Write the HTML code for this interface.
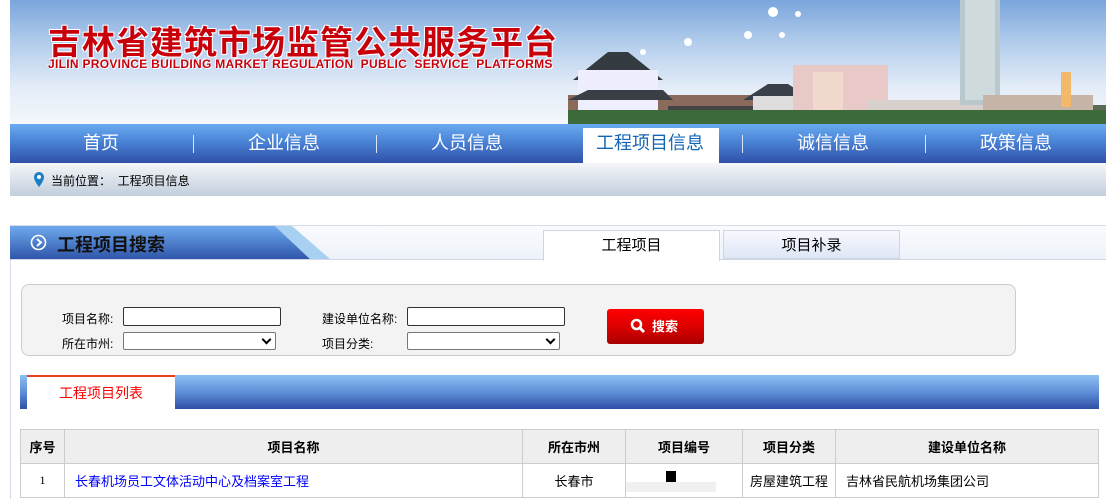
<!DOCTYPE html>
<html><head><meta charset="utf-8"><style>
*{margin:0;padding:0;box-sizing:border-box}
body{width:1106px;height:499px;overflow:hidden;background:#fff;font-family:"Liberation Sans","Noto Sans CJK SC",sans-serif;font-size:12px;color:#000;position:relative}
.abs{position:absolute}
#hdr{left:10px;top:0;width:1096px;height:124px;background:linear-gradient(180deg,#7aa5dc 0%,#b3cdec 35%,#e3ecf8 70%,#f4f7fb 100%);overflow:hidden}
#nav{left:10px;top:124px;width:1096px;height:39px;background:linear-gradient(180deg,#6aaaf0 0%,#4a83d6 45%,#2f4fa8 100%)}
.ni{position:absolute;top:0;height:39px;line-height:39px;color:#fff;font-size:18px;text-align:center;width:150px}
.sep{position:absolute;top:11px;width:1px;height:18px;background:#d8e6f6}
#crumb{left:10px;top:163px;width:1096px;height:33px;background:linear-gradient(180deg,#f5f6f8,#c2cedd)}
input.t{position:absolute;height:19px;border:1px solid #333;border-radius:2px;background:#fff}
.sel{position:absolute;height:18px;border:1px solid #777;border-radius:2px;background:#fff}
.sel:after{content:"";position:absolute;right:5px;top:3px;width:5px;height:5px;border-right:2px solid #000;border-bottom:2px solid #000;transform:rotate(45deg)}
td,th{border:1px solid #ccc;height:34px;font-size:13px}
th{background:#eee;font-weight:bold}
</style></head><body>
<div id="hdr" class="abs">
 <div class="abs" style="left:38px;top:16px;font-size:33px;font-weight:bold;color:#c8000a;letter-spacing:1px;text-shadow:1px 1px 0 #fff,-1px -1px 0 #fff,1px -1px 0 #fff,-1px 1px 0 #fff">吉林省建筑市场监管公共服务平台</div>
 <div class="abs" style="left:38px;top:57px;font-size:12px;font-weight:bold;color:#c8000a;white-space:nowrap;letter-spacing:0.3px;text-shadow:1px 1px 0 #fff,-1px -1px 0 #fff">JILIN PROVINCE BUILDING MARKET REGULATION &nbsp;PUBLIC &nbsp;SERVICE &nbsp;PLATFORMS</div>
 <svg class="abs" style="left:558px;top:0" width="538" height="124">
  <rect x="0" y="105" width="538" height="19" fill="#5b6a52"/>
  <rect x="0" y="95" width="260" height="20" fill="#8a6a5a"/>
  <polygon points="5,80 40,52 60,52 95,80" fill="#333a40"/>
  <rect x="10" y="70" width="80" height="40" fill="#eef"/>
  <polygon points="0,100 20,90 95,90 105,100" fill="#3a3f45"/>
  <rect x="100" y="106" width="160" height="10" fill="#444"/>
  <polygon points="175,100 200,84 220,84 245,100" fill="#3a4048"/>
  <rect x="185" y="96" width="50" height="14" fill="#ddd"/>
  <rect x="225" y="65" width="95" height="45" fill="#e9c8c8"/>
  <rect x="245" y="72" width="30" height="38" fill="#f0d8cc"/>
  <rect x="300" y="100" width="140" height="15" fill="#d8d0cc"/>
  <rect x="392" y="0" width="40" height="105" fill="#b8c8cc"/>
  <rect x="397" y="0" width="30" height="100" fill="#cfdadc"/>
  <rect x="415" y="95" width="110" height="15" fill="#c6b4a8"/>
  <rect x="493" y="72" width="10" height="35" fill="#f3b96a"/>
  <rect x="0" y="110" width="538" height="14" fill="#3d6a3a"/>
  <g fill="#fff"><circle cx="205" cy="12" r="5"/><circle cx="230" cy="14" r="3"/><circle cx="180" cy="35" r="4"/><circle cx="214" cy="35" r="3"/><circle cx="120" cy="42" r="4"/><circle cx="75" cy="52" r="3"/></g>
 </svg>
</div>
<div id="nav" class="abs">
 <div class="ni" style="left:16px">首页</div><div class="sep" style="left:183px"></div>
 <div class="ni" style="left:199px">企业信息</div><div class="sep" style="left:366px"></div>
 <div class="ni" style="left:382px">人员信息</div>
 <div class="abs" style="left:573px;top:4px;width:136px;height:35px;background:#fff"></div>
 <div class="ni" style="left:565px;color:#1565b5">工程项目信息</div><div class="sep" style="left:732px"></div>
 <div class="ni" style="left:748px">诚信信息</div><div class="sep" style="left:915px"></div>
 <div class="ni" style="left:931px">政策信息</div>
</div>
<div id="crumb" class="abs">
 <svg class="abs" style="left:23px;top:8px" width="12" height="17"><path d="M6 1a5 5 0 0 0-5 5c0 4 5 10 5 10s5-6 5-10a5 5 0 0 0-5-5z" fill="#1a7fc4"/><circle cx="6" cy="6" r="2" fill="#fff"/></svg>
 <div class="abs" style="left:41px;top:9px;font-size:12px">当前位置： &nbsp;工程项目信息</div>
</div>
<div class="abs" style="left:10px;top:225px;width:1096px;height:274px;border-left:1px solid #d5dbe8;border-top:1px solid #d5dbe8"></div>
<div class="abs" style="left:10px;top:226px;width:1096px;height:34px;background:linear-gradient(180deg,#fafbfd,#eef2fa);border-bottom:1px solid #d0d8e8"></div>
<svg class="abs" style="left:10px;top:226px" width="330" height="34"><defs><linearGradient id="g1" x1="0" y1="0" x2="0" y2="1"><stop offset="0" stop-color="#6eaaee"/><stop offset="1" stop-color="#2f55aa"/></linearGradient></defs><polygon points="0,0 265,0 300,33 0,33" fill="url(#g1)"/><polygon points="265,0 282,0 320,33 300,33" fill="#a8d0f0"/></svg>
<svg class="abs" style="left:30px;top:234px" width="17" height="17"><circle cx="8.5" cy="8.5" r="7" fill="none" stroke="#fff" stroke-width="1.6"/><path d="M7 5l4 3.5-4 3.5" fill="none" stroke="#fff" stroke-width="2"/></svg>
<div class="abs" style="left:57px;top:231px;font-size:18px;font-weight:bold;color:#111">工程项目搜索</div>
<div class="abs" style="left:543px;top:230px;width:177px;height:31px;background:#fff;border:1px solid #cdd6e6;border-bottom:none;text-align:center;line-height:30px;font-size:15px">工程项目</div>
<div class="abs" style="left:723px;top:230px;width:177px;height:29px;background:linear-gradient(180deg,#f6f8fd,#dfe6f6);border:1px solid #cdd6e6;text-align:center;line-height:30px;font-size:15px">项目补录</div>

<div class="abs" style="left:21px;top:284px;width:995px;height:72px;background:#f3f3f3;border:1px solid #ccc;border-radius:8px"></div>
<div class="abs" style="left:62px;top:310px">项目名称:</div>
<input class="t" style="left:123px;top:307px;width:158px">
<div class="abs" style="left:322px;top:310px">建设单位名称:</div>
<input class="t" style="left:407px;top:307px;width:158px">
<div class="abs" style="left:62px;top:335px">所在市州:</div>
<div class="sel" style="left:123px;top:332px;width:153px"></div>
<div class="abs" style="left:322px;top:335px">项目分类:</div>
<div class="sel" style="left:407px;top:332px;width:153px"></div>
<div class="abs" style="left:607px;top:309px;width:97px;height:35px;border-radius:3px;background:linear-gradient(180deg,#f00 0%,#d00 50%,#a00 100%);color:#fff;font-weight:bold;font-size:13px;line-height:35px;padding-left:45px">搜索</div>
<svg class="abs" style="left:630px;top:318px" width="16" height="16"><circle cx="6.5" cy="6.5" r="4.5" fill="none" stroke="#fff" stroke-width="2.5"/><path d="M10 10l4 4" stroke="#fff" stroke-width="3"/></svg>

<div class="abs" style="left:20px;top:375px;width:1079px;height:34px;background:linear-gradient(180deg,#8bc0f2,#5f8fd8 50%,#2e4fa6)"></div>
<div class="abs" style="left:27px;top:375px;width:148px;height:34px;background:#fff;border-top:2px solid #e8401c;color:#f00;font-size:14px;text-align:center;line-height:32px">工程项目列表</div>

<table class="abs" style="left:20px;top:429px;width:1079px;border-collapse:collapse">
<tr><th style="width:44px">序号</th><th style="width:458px">项目名称</th><th style="width:103px">所在市州</th><th style="width:117px">项目编号</th><th style="width:93px">项目分类</th><th>建设单位名称</th></tr>
<tr><td style="text-align:center;font-size:12px;font-family:'Liberation Serif'">1</td><td style="color:#00f;padding-left:10px">长春机场员工文体活动中心及档案室工程</td><td style="text-align:center">长春市</td><td style="position:relative"><div style="position:absolute;left:40px;top:7px;width:10px;height:12px;background:#000"></div><div style="position:absolute;left:0;top:18px;width:90px;height:10px;background:#f0f0f0"></div></td><td style="text-align:center">房屋建筑工程</td><td style="padding-left:10px">吉林省民航机场集团公司</td></tr>
</table>
</body></html>
